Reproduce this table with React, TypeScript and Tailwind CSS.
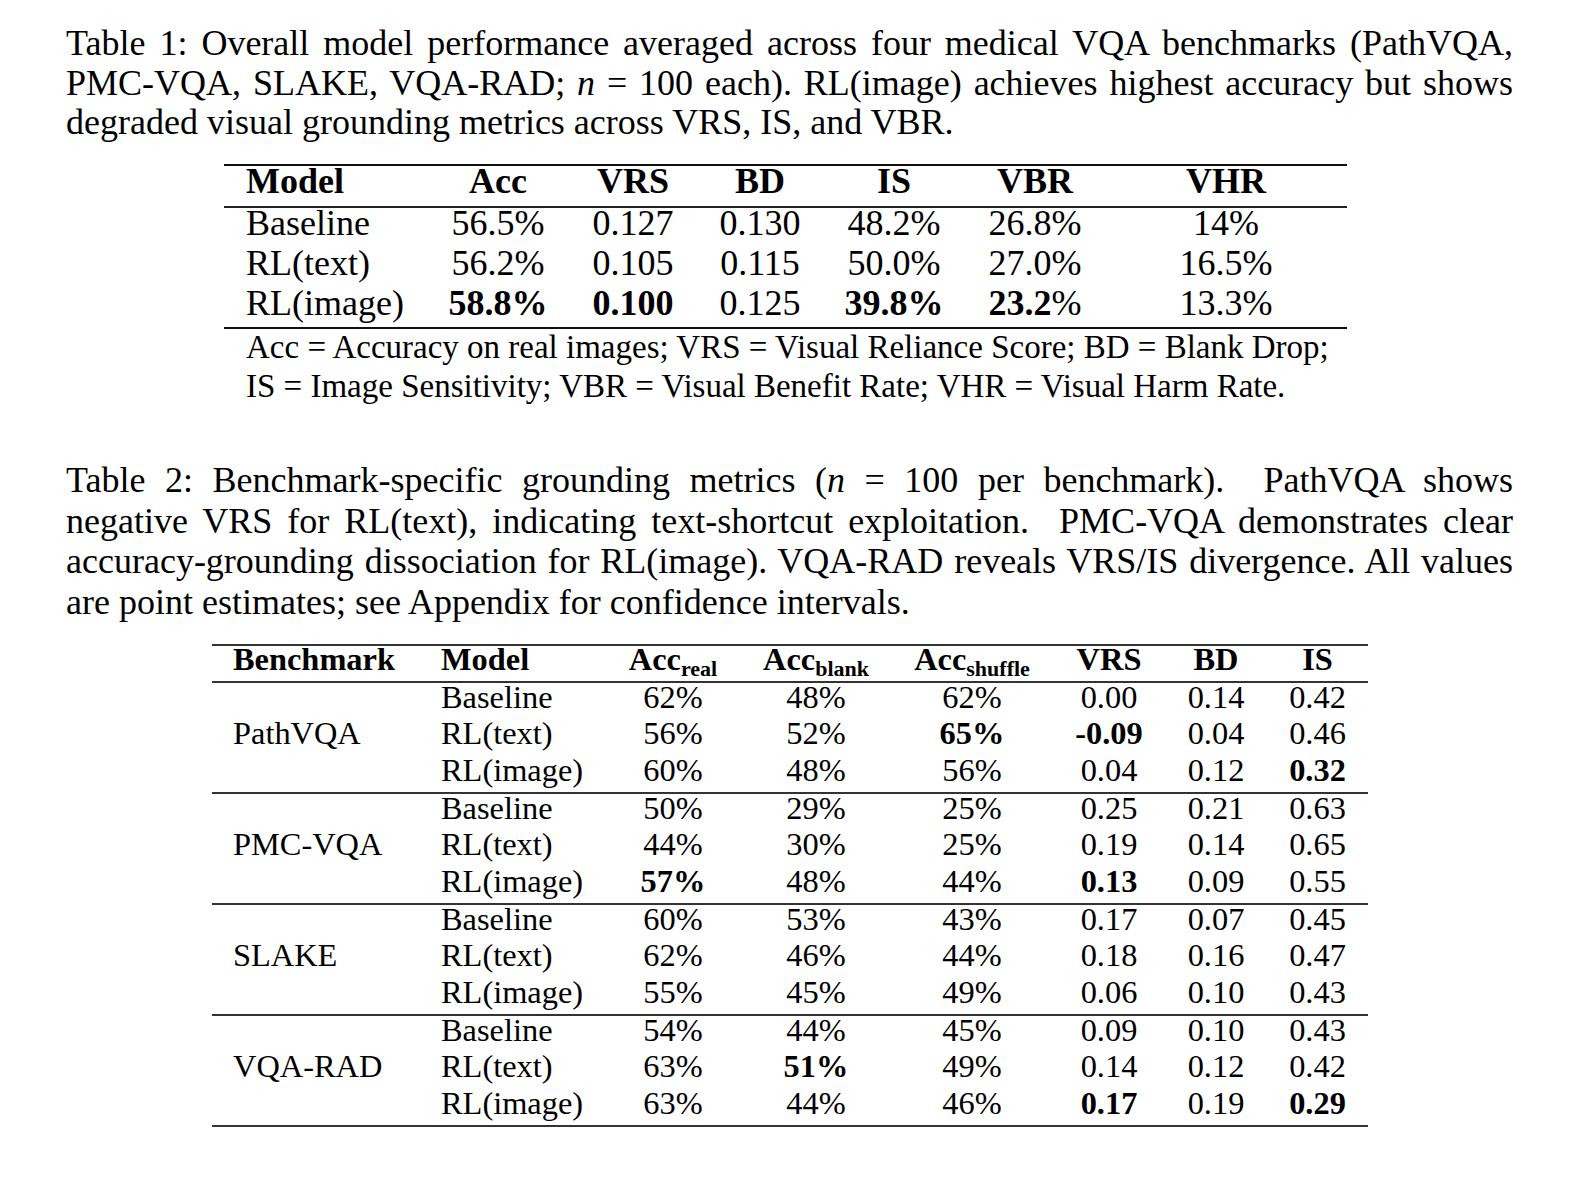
import React from 'react';

type Cell = string | React.ReactNode;

const b = (s: string) => <span className="font-bold">{s}</span>;

const t1Rows: Cell[][] = [
    ['Baseline', '56.5%', '0.127', '0.130', '48.2%', '26.8%', '14%'],
    ['RL(text)', '56.2%', '0.105', '0.115', '50.0%', '27.0%', '16.5%'],
    ['RL(image)', b('58.8%'), b('0.100'), '0.125', b('39.8%'), <><span className="font-bold">23.2</span>%</>, '13.3%'],
];

const t2Groups: { name: string; rows: Cell[][] }[] = [
    {
        name: 'PathVQA',
        rows: [
            ['Baseline', '62%', '48%', '62%', '0.00', '0.14', '0.42'],
            ['RL(text)', '56%', '52%', b('65%'), b('-0.09'), '0.04', '0.46'],
            ['RL(image)', '60%', '48%', '56%', '0.04', '0.12', b('0.32')],
        ],
    },
    {
        name: 'PMC-VQA',
        rows: [
            ['Baseline', '50%', '29%', '25%', '0.25', '0.21', '0.63'],
            ['RL(text)', '44%', '30%', '25%', '0.19', '0.14', '0.65'],
            ['RL(image)', b('57%'), '48%', '44%', b('0.13'), '0.09', '0.55'],
        ],
    },
    {
        name: 'SLAKE',
        rows: [
            ['Baseline', '60%', '53%', '43%', '0.17', '0.07', '0.45'],
            ['RL(text)', '62%', '46%', '44%', '0.18', '0.16', '0.47'],
            ['RL(image)', '55%', '45%', '49%', '0.06', '0.10', '0.43'],
        ],
    },
    {
        name: 'VQA-RAD',
        rows: [
            ['Baseline', '54%', '44%', '45%', '0.09', '0.10', '0.43'],
            ['RL(text)', '63%', b('51%'), '49%', '0.14', '0.12', '0.42'],
            ['RL(image)', '63%', '44%', '46%', b('0.17'), '0.19', b('0.29')],
        ],
    },
];

const rowHeights = ['h-[36px]', 'h-[37px]', 'h-[36px]'];

// one justified line of a caption
const JLine: React.FC<{ children: React.ReactNode }> = ({ children }) => (
    <div className="text-justify [text-align-last:justify]">{children}</div>
);

export default function App() {
    return (
        <div className="min-h-screen bg-white text-black font-['Liberation_Serif',serif]">
            <div className="w-[1447px] ml-[66px] pt-[24px]">
                {/* Table 1 caption */}
                <div className="text-[36px] leading-[39.5px]">
                    <JLine>Table 1: Overall model performance averaged across four medical VQA benchmarks (PathVQA,</JLine>
                    <JLine>
                        PMC-VQA, SLAKE, VQA-RAD; <span className="italic">n</span> = 100 each). RL(image) achieves highest accuracy but shows
                    </JLine>
                    <div>degraded visual grounding metrics across VRS, IS, and VBR.</div>
                </div>

                {/* Table 1 */}
                <div className="ml-[158px] w-[1123px] mt-[21.5px] text-[36px]">
                    <div className="h-[2px] bg-[#111]" />
                    <div className="grid grid-cols-[203px_142px_128px_126px_142px_140px_242px] leading-[30px] pb-[10px] font-bold text-center">
                        <div className="text-left pl-[22px]">Model</div>
                        <div>Acc</div>
                        <div>VRS</div>
                        <div>BD</div>
                        <div>IS</div>
                        <div>VBR</div>
                        <div>VHR</div>
                    </div>
                    <div className="h-[2px] bg-[#222]" />
                    {t1Rows.map((row, i) => (
                        <div
                            key={i}
                            className={`grid grid-cols-[203px_142px_128px_126px_142px_140px_242px] leading-[30px] text-center ${i === 2 ? 'h-[40px] pt-[1px]' : 'h-[39.5px]'}`}
                        >
                            {row.map((c, j) => (
                                <div key={j} className={j === 0 ? 'text-left pl-[22px]' : ''}>
                                    {c}
                                </div>
                            ))}
                        </div>
                    ))}
                    <div className="h-[2px] bg-[#111]" />
                    <div className="pl-[22px] text-[33px] leading-[39px] -mt-[1px]">
                        <div>Acc = Accuracy on real images; VRS = Visual Reliance Score; BD = Blank Drop;</div>
                        <div>IS = Image Sensitivity; VBR = Visual Benefit Rate; VHR = Visual Harm Rate.</div>
                    </div>
                </div>

                {/* Table 2 caption */}
                <div className="mt-[54px] text-[36px] leading-[40.5px]">
                    <JLine>
                        Table 2: Benchmark-specific grounding metrics (<span className="italic">n</span> = 100 per benchmark).&nbsp; PathVQA shows
                    </JLine>
                    <JLine>negative VRS for RL(text), indicating text-shortcut exploitation.&nbsp; PMC-VQA demonstrates clear</JLine>
                    <JLine>accuracy-grounding dissociation for RL(image). VQA-RAD reveals VRS/IS divergence. All values</JLine>
                    <div>are point estimates; see Appendix for confidence intervals.</div>
                </div>

                {/* Table 2 */}
                <div className="ml-[146px] w-[1156px] mt-[22px] text-[32.4px]">
                    <div className="h-[2px] bg-[#333]" />
                    <div className="grid grid-cols-[207px_186px_136px_150px_162px_112px_102px_101px] h-[35px] leading-[26px] font-bold text-center">
                        <div className="text-left pl-[21px]">Benchmark</div>
                        <div className="text-left pl-[22px]">Model</div>
                        <div>
                            Acc<sub className="text-[22px]">real</sub>
                        </div>
                        <div>
                            Acc<sub className="text-[22px]">blank</sub>
                        </div>
                        <div>
                            Acc<sub className="text-[22px]">shuffle</sub>
                        </div>
                        <div>VRS</div>
                        <div>BD</div>
                        <div>IS</div>
                    </div>
                    <div className="h-[2px] bg-[#333]" />
                    {t2Groups.map((g) => (
                        <div key={g.name}>
                            {g.rows.map((row, i) => (
                                <div
                                    key={i}
                                    className={`grid grid-cols-[207px_186px_136px_150px_162px_112px_102px_101px] leading-[28px] text-center ${rowHeights[i]}`}
                                >
                                    <div className="text-left pl-[21px]">{i === 1 ? g.name : ''}</div>
                                    {row.map((c, j) => (
                                        <div key={j} className={j === 0 ? 'text-left pl-[22px]' : ''}>
                                            {c}
                                        </div>
                                    ))}
                                </div>
                            ))}
                            <div className="h-[2px] bg-[#333]" />
                        </div>
                    ))}
                </div>
            </div>
        </div>
    );
}
